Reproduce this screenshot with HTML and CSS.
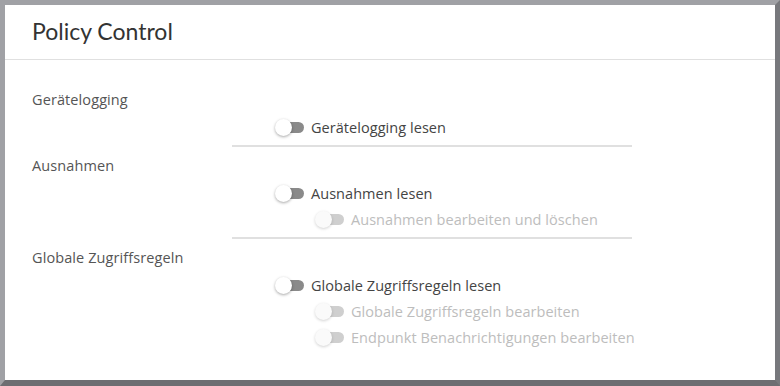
FILE: index.html
```html
<!DOCTYPE html>
<html lang="de">
<head>
  <meta charset="UTF-8">
  <title>Policy Control</title>
  <link rel="stylesheet" href="styles.css">
</head>
<body>
  <div class="card">
    <div class="card-header">
      <h1 class="card-title">Policy Control</h1>
    </div>
    <div class="card-body">
      <!-- Gerätelogging -->
      <div class="group">
        <div class="group-label">Gerätelogging</div>
        <div class="group-perms">
          <div class="perm">
            <span class="toggle"></span>
            <span class="perm-label">Gerätelogging lesen</span>
          </div>
        </div>
      </div>
      <!-- Ausnahmen -->
      <div class="group">
        <div class="group-label">Ausnahmen</div>
        <div class="group-perms">
          <div class="perm">
            <span class="toggle"></span>
            <span class="perm-label">Ausnahmen lesen</span>
          </div>
          <div class="perm sub disabled">
            <span class="toggle"></span>
            <span class="perm-label">Ausnahmen bearbeiten und löschen</span>
          </div>
        </div>
      </div>
      <!-- Globale Zugriffsregeln -->
      <div class="group last">
        <div class="group-label">Globale Zugriffsregeln</div>
        <div class="group-perms">
          <div class="perm">
            <span class="toggle"></span>
            <span class="perm-label">Globale Zugriffsregeln lesen</span>
          </div>
          <div class="perm sub disabled">
            <span class="toggle"></span>
            <span class="perm-label">Globale Zugriffsregeln bearbeiten</span>
          </div>
          <div class="perm sub disabled">
            <span class="toggle"></span>
            <span class="perm-label">Endpunkt Benachrichtigungen bearbeiten</span>
          </div>
        </div>
      </div>
    </div>
  </div>
</body>
</html>
```

FILE: styles.css
```css
:root {
  --text: #444;
  --text-label: #555;
  --text-disabled: #bdbdbd;
  --divider: #e0e0e0;
}
* {
  box-sizing: border-box;
}
body {
  margin: 0;
  padding: 0;
  font-family: 'Open Sans', 'Lato', Arial, sans-serif;
  color: var(--text);
  background: #fff;
}
.card {
  width: 780px;
  height: 386px;
  background: #fff;
  border-style: solid;
  border-width: 5px 5px 6px 5px;
  border-color: #a0a1a5 #77787c #6d6e72 #a0a1a5;
}
.card-header {
  height: 55px;
  display: flex;
  align-items: center;
  padding: 0 27px;
  border-bottom: 1px solid var(--divider);
}
.card-title {
  margin: 0;
  font-family: 'Lato', 'Open Sans', Arial, sans-serif;
  font-size: 23px;
  font-weight: 400;
  color: #333;
  padding-bottom: 2px;
}
.card-body {
  padding: 30px 27px 0;
}
.group-label {
  line-height: 20px;
  font-size: 14.5px;
  letter-spacing: 0.1px;
  color: var(--text-label);
  margin-bottom: 4px;
}
.group-perms {
  width: 400px;
  margin-left: 200px;
  padding: 0 0 5px 43px;
  border-bottom: 2px solid var(--divider);
  margin-bottom: 9px;
}
.group.last .group-perms {
  border-bottom: none;
}
.perm {
  height: 26px;
  display: flex;
  align-items: center;
  gap: 7px;
  font-size: 14.5px;
  letter-spacing: 0.05px;
  white-space: nowrap;
  color: var(--text);
}
.perm.sub {
  padding-left: 40px;
}
.perm.disabled {
  color: var(--text-disabled);
}
/* Switch: track + knob */
.toggle {
  position: relative;
  width: 29px;
  height: 17px;
  flex: none;
}
.toggle::before {
  content: "";
  position: absolute;
  left: 8px;
  top: 3px;
  width: 21px;
  height: 11px;
  border-radius: 6px;
  background: #8a8a8a;
}
.toggle::after {
  content: "";
  position: absolute;
  left: 0;
  top: 0;
  width: 17px;
  height: 17px;
  border-radius: 50%;
  background: #fff;
  box-shadow: 0 1px 3px rgba(0,0,0,0.35);
}
.perm.disabled .toggle::before {
  background: #cfcfcf;
}
.perm.disabled .toggle::after {
  background: #fafafa;
  box-shadow: 0 1px 3px rgba(0,0,0,0.18);
}
```
